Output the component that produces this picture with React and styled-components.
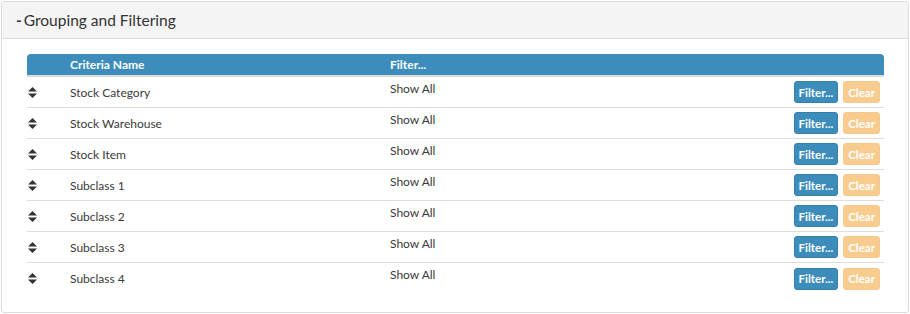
import styled, { createGlobalStyle } from "styled-components";

const GlobalStyle = createGlobalStyle`
  body {
    margin: 0;
    background: #fff;
    font-family: Lato, "Liberation Sans", sans-serif;
    color: #333;
  }
`;

const Panel = styled.div`
  margin: 1px;
  width: 908px;
  height: 312px;
  box-sizing: border-box;
  border: 1px solid #dcdcdc;
  border-radius: 3px;
  background: #fff;
`;

const PanelHeader = styled.div`
  height: 37px;
  box-sizing: border-box;
  background: #f4f4f4;
  border-bottom: 1px solid #dcdcdc;
  display: flex;
  align-items: center;
  padding: 0 0 1px 14px;
  font-size: 15.5px;
  color: #333;
`;

const Dash = styled.span`
  font-weight: 700;
  margin-right: 2px;
`;

const PanelBody = styled.div`
  padding: 15px 24px 0 25px;
`;

const Grid = styled.div`
  display: grid;
  grid-template-columns: 43px 320px 1fr auto;
`;

const HeadCell = styled.div`
  background: #3c8dbc;
  color: #fff;
  font-weight: 700;
  font-size: 12px;
  height: 21px;
  line-height: 21px;
  border-bottom: 2px solid #ddd;
  border-top-left-radius: ${(p) => (p.first ? "4px" : "0")};
  border-top-right-radius: ${(p) => (p.last ? "4px" : "0")};
`;

const Cell = styled.div`
  box-sizing: border-box;
  height: 31px;
  border-bottom: ${(p) => (p.end ? "none" : "1px solid #ddd")};
  font-size: 12px;
  color: #3a3a3a;
  display: flex;
  align-items: ${(p) => (p.top ? "flex-start" : "center")};
  padding-top: ${(p) => (p.top ? "4px" : "0")};
  justify-content: ${(p) => (p.right ? "flex-end" : "flex-start")};
  gap: 5px;
  padding-right: ${(p) => (p.right ? "4px" : "0")};
  padding-left: ${(p) => (p.icon ? "1px" : "0")};
`;

const Button = styled.button`
  font-family: inherit;
  font-size: 11.5px;
  font-weight: 700;
  color: #fff;
  height: 22px;
  padding: 0 4px;
  border-radius: 3px;
  border: 1px solid ${(p) => (p.clear ? "#f5c98a" : "#367fa9")};
  background: ${(p) => (p.clear ? "#f8cc8f" : "#3c8dbc")};
  cursor: pointer;
`;

const SortIcon = () => (
  <svg width="9" height="11" viewBox="0 0 9 11">
    <path d="M4.5 0 L9 4.6 H0 Z M0 6.4 H9 L4.5 11 Z" fill="#333" />
  </svg>
);

const criteria = [
  "Stock Category",
  "Stock Warehouse",
  "Stock Item",
  "Subclass 1",
  "Subclass 2",
  "Subclass 3",
  "Subclass 4",
];

export default function App() {
  return (
    <>
      <GlobalStyle />
      <Panel>
        <PanelHeader>
          <Dash>-</Dash>Grouping and Filtering
        </PanelHeader>
        <PanelBody>
          <Grid>
            <HeadCell first />
            <HeadCell>Criteria Name</HeadCell>
            <HeadCell>Filter...</HeadCell>
            <HeadCell last />
            {criteria.map((name, i) => {
              const end = i === criteria.length - 1;
              return [
                <Cell key={name + "i"} end={end} icon>
                  <SortIcon />
                </Cell>,
                <Cell key={name + "n"} end={end}>
                  {name}
                </Cell>,
                <Cell key={name + "f"} end={end} top>
                  Show All
                </Cell>,
                <Cell key={name + "b"} end={end} right>
                  <Button>Filter...</Button>
                  <Button clear>Clear</Button>
                </Cell>,
              ];
            })}
          </Grid>
        </PanelBody>
      </Panel>
    </>
  );
}
